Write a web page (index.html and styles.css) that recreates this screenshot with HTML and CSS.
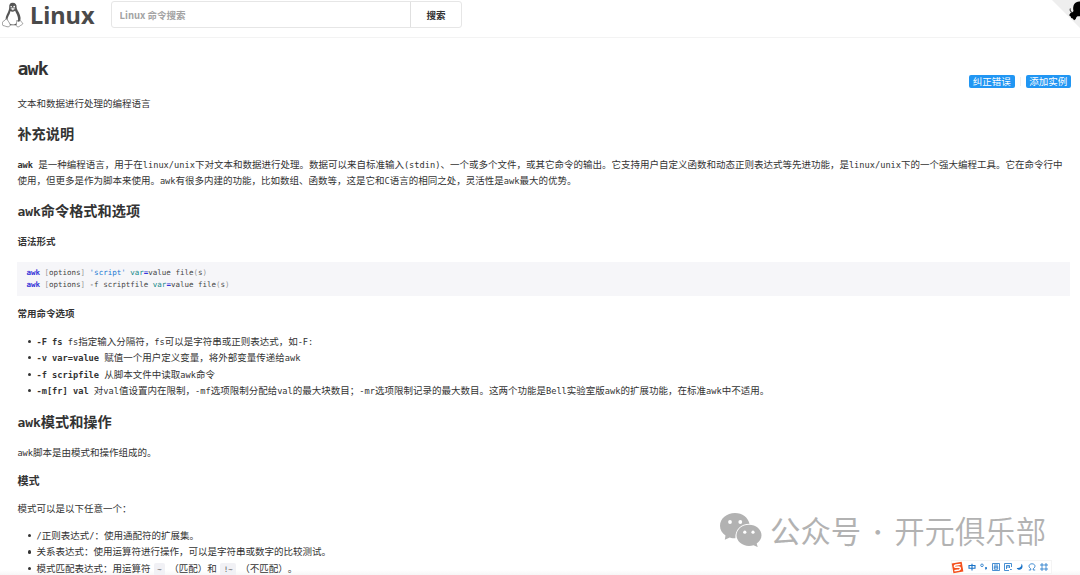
FILE: index.html
```html
<!DOCTYPE html>
<html lang="zh-CN">
<head>
    <meta charset="UTF-8">
    <meta name="viewport" content="width=device-width, initial-scale=1.0">
    <title>awk - Linux 命令搜索</title>
    <link rel="stylesheet" href="styles.css">
</head>
<body>
<header class="header">
    <a class="logo">
        <svg class="tux" viewBox="0 0 22 26">
            <path d="M7.2 5.5C7 2.5 8 .8 10.7.8s4 1.700 3.900 4.500c0 2.600 3.300 5.500 3.900 10.200.2 2-.2 3-.8 3.800l-3 4H7l-3.200-5.500C3 14 7.300 9.500 7.200 5.500z" fill="#555"/>
            <path d="M8.300 9.200c1.500.7 3.200.7 4.800-.4 1 2.600 3.200 5.300 3 9-.2 2.200-1.600 4.800-5.300 4.800-3 0-4-1.500-5.200-4.400-.5-3 2.500-5.700 2.700-9z" fill="#fff"/>
            <path d="M8.300 6.800l2.300-1.200 2.800 1-2.500 2z" fill="#eee" stroke="#666" stroke-width=".5"/>
            <circle cx="9.200" cy="4.800" r=".8" fill="#fff"/>
            <circle cx="12.200" cy="4.700" r=".9" fill="#fff"/>
            <path d="M4 16.800c1.200 0 2.200 2.500 3.500 4.300 1.300 1.900.5 3.500-1.200 3.700C4.500 25 3 23.800.9 23.500c-.9-.4-.2-2-.4-3.200C.7 19 2.500 19.500 4 16.800z" fill="#fff" stroke="#777" stroke-width=".7"/>
            <path d="M15 18.200c.2 1.500 2.200 1.700 3.200.2.800-.3.500 1.700 2.700 3-.2 1.400-2.400 1.700-3.400 2.900-1 1-3 .5-3.200-.8-.2-1.700.4-3.400.7-5.300z" fill="#fff" stroke="#777" stroke-width=".7"/>
        </svg>
        <span class="logo-text">Linux</span>
    </a>
    <form class="search">
        <input class="search-input" type="text" placeholder="Linux 命令搜索">
        <button class="search-btn" type="button">搜索</button>
    </form>
    <svg class="corner" viewBox="0 0 28 28">
        <path d="M0 0h28v28z" fill="#eee"/>
        <path d="M28 1.500c-2.500-.2-4.500.8-5.700 2.500-1.200 2-1.500 4.700-.8 7-.6 1.300-1.700 1.400-2.600 1.500-.7.900-1.700 2.200-1.600 3l1.400 1 .5 1.600 1.500.4 1.400 1.700 1.700-1.300c.2-1.500.9-2.400 2-2.700H28z" fill="#000"/>
        <path d="M20.300 12.500c-2-.5-2.500-2.200-2-4" fill="none" stroke="#222" stroke-width="1"/>
    </svg>
</header>

<main class="content">
    <div class="edit-links">
        <a class="tag">纠正错误</a><i class="divider"></i><a class="tag">添加实例</a>
    </div>

    <h1><span class="en">awk</span></h1>
    <p>文本和数据进行处理的编程语言</p>

    <h2>补充说明</h2>
    <p class="intro"><strong class="en">awk</strong><span class="en"> </span>是一种编程语言，用于在<span class="en">linux/unix</span>下对文本和数据进行处理。数据可以来自标准输入<span class="en">(stdin)</span>、一个或多个文件，或其它命令的输出。它支持用户自定义函数和动态正则表达式等先进功能，是<span class="en">linux/unix</span>下的一个强大编程工具。它在命令行中使用，但更多是作为脚本来使用。<span class="en">awk</span>有很多内建的功能，比如数组、函数等，这是它和<span class="en">C</span>语言的相同之处，灵活性是<span class="en">awk</span>最大的优势。</p>

    <h2><span class="en">awk</span>命令格式和选项</h2>
    <h4>语法形式</h4>
<pre><b class="cmd">awk</b> <i>[</i>options<i>]</i> <span class="str">'script'</span> <span class="var">var</span><b class="op">=</b>value file<i>(</i>s<i>)</i>
<b class="cmd">awk</b> <i>[</i>options<i>]</i> -f scriptfile <span class="var">var</span><b class="op">=</b>value file<i>(</i>s<i>)</i></pre>
    <h4>常用命令选项</h4>
    <ul>
        <li><strong class="en">-F fs</strong><span class="en"> fs</span>指定输入分隔符，<span class="en">fs</span>可以是字符串或正则表达式，如<span class="en">-F:</span></li>
        <li><strong class="en">-v var=value</strong><span class="en"> </span>赋值一个用户定义变量，将外部变量传递给<span class="en">awk</span></li>
        <li><strong class="en">-f scripfile</strong><span class="en"> </span>从脚本文件中读取<span class="en">awk</span>命令</li>
        <li><strong class="en">-m[fr] val</strong><span class="en"> </span>对<span class="en">val</span>值设置内在限制，<span class="en">-mf</span>选项限制分配给<span class="en">val</span>的最大块数目；<span class="en">-mr</span>选项限制记录的最大数目。这两个功能是<span class="en">Bell</span>实验室版<span class="en">awk</span>的扩展功能，在标准<span class="en">awk</span>中不适用。</li>
    </ul>

    <h2><span class="en">awk</span>模式和操作</h2>
    <p><span class="en">awk</span>脚本是由模式和操作组成的。</p>
    <h3>模式</h3>
    <p>模式可以是以下任意一个：</p>
    <ul>
        <li><span class="en">/</span>正则表达式<span class="en">/</span>：使用通配符的扩展集。</li>
        <li>关系表达式：使用运算符进行操作，可以是字符串或数字的比较测试。</li>
        <li>模式匹配表达式：用运算符<code>~</code>（匹配）和<code>!~</code>（不匹配）。</li>
    </ul>
</main>

<div class="watermark">
    <svg class="wechat" viewBox="0 0 42 34">
        <path d="M15 0C6.700 0 0 5.500 0 12.800c0 4 2 7.500 5.500 9.800L4.800 26.800l5-2.400c2 .6 3.500.8 5.600.8C15 16.500 21 11 29.500 10.800 28 4.500 22.500 0 15 0z" fill="#b2b2b2"/>
        <path d="M41.500 22.300c0-5.800-5.500-10.500-12.500-10.500S16.500 16.500 16.500 22.300 22 33 29 33c1.600 0 3.200-.3 4.600-.8l4.100 1.900-1-3.700c3-2 4.800-4.800 4.800-8.100z" fill="#b2b2b2"/>
        <circle cx="10" cy="9" r="1.900" fill="#fff"/>
        <circle cx="20.300" cy="9" r="1.900" fill="#fff"/>
        <circle cx="24.800" cy="19.200" r="1.600" fill="#fff"/>
        <circle cx="33" cy="19.200" r="1.600" fill="#fff"/>
    </svg>
    <span class="wm-label">公众号</span><span class="wm-dot">·</span><span class="wm-name">开元俱乐部</span>
</div>

<div class="ime">
    <svg class="sogou" viewBox="0 0 14 14">
        <path d="M.8 2.600L11.500.8l1.800 10.400-10.700 2z" fill="#f4511e"/>
        <path d="M10.200 3.600L5 4.300c-2 .3-1.700 2.500 0 2.400l3.300-.2c2.200 0 2.400 2.800.4 3.200l-5 .8" fill="none" stroke="#fff" stroke-width="1.500"/>
    </svg>
    <svg class="ime-icon" viewBox="0 0 8 8"><path d="M1 2.500h6v2.700H1zM4 .8v6.700" stroke-width="1.100"/></svg>
    <svg class="ime-icon" viewBox="0 0 8 8"><circle cx="2" cy="2.300" r="1.300"/><circle cx="6" cy="5" r=".7" fill="#1a73c8"/><path d="M6.500 5l-.8 1.800"/></svg>
    <svg class="ime-icon" viewBox="0 0 8 8"><path d="M.5.500h7v7h-7zM2 2h4M2.300 3.300h3.400v2.900H2.300zM2.500 4.700h3"/></svg>
    <svg class="ime-icon" viewBox="0 0 8 8"><path d="M7.500 4V.5h-7v7H5M2.500 6V2.500h3V5M2.500 4h3M6 6.500h1.800"/></svg>
    <svg class="ime-icon" viewBox="0 0 8 8"><path d="M5.500.800c2 2 1 6-2 6C2.200 6.800 1 6 .7 5c2.800.5 5-1 4.800-4.200z" fill="#1a73c8" stroke="none"/></svg>
    <svg class="ime-icon" viewBox="0 0 8 8"><path d="M.8 7h2V5.800C-.3 3.500 1 .8 4 .8s4.300 2.700 1.200 5V7h2"/></svg>
    <svg class="ime-icon" viewBox="0 0 8 8"><path d="M1 1h2v2H1zM5 1h2v2H5zM1 5h2v2H1zM5 5h2v2H5z"/></svg>
</div>
</body>
</html>
```
FILE: styles.css
```css
* { box-sizing: border-box; }
body { position: relative; margin: 0; height: 575px; overflow: hidden; background: linear-gradient(#fff 570px, #f7f7f7 575px); color: #333; font-family: "Noto Sans CJK SC", "Noto Sans", sans-serif; font-size: 9.5px; line-height: 16px; text-spacing-trim: space-all; }

/* Latin runs are monospaced beside the Chinese text */
.en { font-family: "DejaVu Sans Mono", monospace; font-size: 0.912em; line-height: 1; white-space: pre-wrap; }

/* Header */
.header { display: flex; align-items: flex-start; height: 38px; border-bottom: 1px solid #f3f3f3; }
.logo { display: flex; width: 111px; padding-left: 2px; color: #4a4a4a; }
.tux { width: 22px; height: 26px; margin-top: 2px; }
.logo-text { margin-left: 6px; font: bold 23.6px/31px "Noto Sans", sans-serif; }
.search { display: flex; width: 351px; height: 27px; margin-top: 1px; border: 1px solid #e6e6e6; border-radius: 3px; }
.search-input { flex: 1; min-width: 0; padding: 0 8px 0 7.5px; border: 0; background: none; font: bold 9.5px "Noto Sans CJK SC", sans-serif; }
.search-input::placeholder { color: #a3a3a3; }
.search-btn { width: 51px; padding: 0; border: 0; border-left: 1px solid #e0e0e0; background: none; color: #333; font: bold 9.5px "Noto Sans CJK SC", sans-serif; }
.corner { width: 28px; height: 28px; margin-left: auto; }

/* Article */
.content { position: relative; padding: 17px 10px 0 17.4px; }
.edit-links { position: absolute; top: 37px; right: 9px; display: flex; align-items: center; }
.tag { width: 45.5px; height: 13px; border-radius: 2px; background: #2196f3; color: #fff; font-size: 9.5px; line-height: 12px; text-align: center; }
.divider { width: 1px; height: 9px; margin: 0 5px; background: #f0f0f0; }
h1, h2, h3, h4 { font-weight: bold; }
h1 { margin: 0 0 16px; font-size: 18.6px; line-height: 24px; }
h1 .en { font-size: 18.2px; letter-spacing: -0.75px; }
h2 { margin: 12px 0 13px; font-size: 14.2px; line-height: 20px; }
h3 { margin: 12px 0; font-size: 11.1px; line-height: 16px; }
h4 { margin: 11px 0 12px; font-size: 9.5px; line-height: 16px; }
p { margin: 11px 0; }
.intro { margin: 14px 0 12px; line-height: 15.6px; }
pre { margin: 12.6px 0 9px; padding: 5px 9px; height: 34px; background: #f6f6f9; color: #444; font: 7.5px/12px "DejaVu Sans Mono", monospace; }
pre + h4 { margin: 9px 0 11.8px; }
pre i { color: #999; font-style: normal; }
.cmd, .op { color: #3535d8; }
.str { color: #1677d2; }
.var { color: #168a8a; }
ul { margin: 11.4px 0 11px; padding-left: 19.1px; list-style: none; }
li { line-height: 16.5px; }
li::before { content: ""; display: inline-block; width: 3.4px; height: 3.4px; margin: 0 5.3px 0 -8.7px; border-radius: 50%; background: #333; vertical-align: 1.7px; }
code { display: inline-block; height: 13px; margin: 0 4px 0 3.3px; padding: 0 3.5px; border-radius: 2px; background: #f1f1f5; color: #555; font: 7.5px/13px "DejaVu Sans Mono", monospace; }

/* Overlays */
.watermark { position: absolute; top: 509px; left: 720px; display: flex; align-items: center; height: 42px; color: #b2b2b2; font-size: 30.4px; line-height: 42px; white-space: nowrap; }
.wechat { width: 42px; height: 34px; margin: 0 8px 0 0; }
.wm-dot { width: 33px; font-size: 22px; text-align: center; }
.wm-name { font-weight: 350; }
.ime { position: absolute; top: 560px; left: 951px; display: flex; align-items: center; gap: 4px; width: 101px; height: 14px; border: 1px solid #f4f4f4; background: #fff; }
.sogou { flex: none; width: 13px; height: 13px; margin-left: -1px; }
.ime-icon { flex: none; width: 8px; height: 8px; fill: none; stroke: #1a73c8; stroke-width: 0.8; }
```
